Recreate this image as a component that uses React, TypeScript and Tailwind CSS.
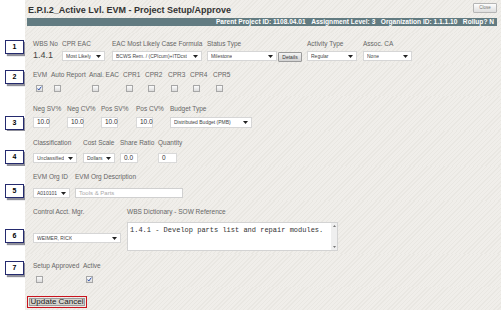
import React from "react";

const panelBg =
  "bg-[repeating-linear-gradient(135deg,#f0eeea_0px,#f0eeea_2px,#e9e7e2_2px,#e9e7e2_3px)]";

function Arrow() {
  return (
    <svg width="5" height="3" viewBox="0 0 5 3" className="shrink-0">
      <path d="M0 0 L5 0 L2.5 3 Z" fill="#222" />
    </svg>
  );
}

function Select({ value, className }: { value: string; className: string }) {
  return (
    <div
      className={`flex items-center justify-between bg-white border border-[#d6d6d6] pl-[3px] pr-[3px] text-[5px] text-[#444] leading-none whitespace-nowrap overflow-hidden ${className}`}
    >
      <span className="truncate">{value}</span>
      <Arrow />
    </div>
  );
}

function TextBox({ value, className }: { value: string; className: string }) {
  return (
    <div
      className={`flex items-center bg-white border border-[#d9d9d9] pl-[3px] text-[6.5px] text-[#333] leading-none ${className}`}
    >
      {value}
    </div>
  );
}

function Check({ checked = false }: { checked?: boolean }) {
  return (
    <div className="ml-[3px] w-[7px] h-[7px] border border-[#a7a7a7] bg-gradient-to-b from-[#fbfbfb] to-[#dcdcdc] flex items-center justify-center">
      {checked && (
        <svg width="5" height="5" viewBox="0 0 5 5">
          <path d="M0.6 2.6 L1.8 4 L4.4 0.6" stroke="#2c4fa8" strokeWidth="1" fill="none" />
        </svg>
      )}
    </div>
  );
}

function Label({ children }: { children: React.ReactNode }) {
  return (
    <div className="h-[8px] text-[6.5px] leading-[8px] text-[#666] whitespace-nowrap">
      {children}
    </div>
  );
}

function Badge({ n, mt }: { n: number; mt: string }) {
  return (
    <div className="w-[25px] shrink-0 bg-white">
      <div
        className={`ml-[5px] w-[19px] h-[14px] bg-white border-[1.5px] border-[#242a6e] shadow-[2px_2px_1px_#8f8f9a] flex items-center justify-center text-[7px] font-bold text-black ${mt}`}
      >
        {n}
      </div>
    </div>
  );
}

function Row({
  n,
  mt,
  className,
  children,
}: {
  n: number;
  mt: string;
  className: string;
  children: React.ReactNode;
}) {
  return (
    <div className="flex">
      <Badge n={n} mt={mt} />
      <div className={`flex-1 pl-[8px] ${panelBg} ${className}`}>{children}</div>
    </div>
  );
}

export default function App() {
  return (
    <div className="w-[501px] h-[312px] overflow-hidden bg-white font-['Liberation_Sans',Arial,sans-serif] flex flex-col">
      {/* header */}
      <div className="flex">
        <div className="w-[25px] shrink-0 bg-white" />
        <div className={`flex-1 h-[33px] pt-[3px] pl-[2px] pr-[4px] ${panelBg}`}>
          <div className="flex justify-between items-start h-[15px]">
            <div className="ml-[1px] mt-[2px] text-[9px] font-bold text-[#333] leading-[10px] whitespace-nowrap">
              E.P.I.2_Active Lvl. EVM - Project Setup/Approve
            </div>
            <div className="w-[24px] h-[10px] border border-[#b5b5b5] rounded-[1px] bg-gradient-to-b from-[#fdfdfd] to-[#dedede] flex items-center justify-center text-[4.5px] text-[#777] leading-none">
              Close
            </div>
          </div>
          <div className="h-[8px] bg-[#627b81] flex items-center justify-end pr-[3px] text-[6.6px] font-bold text-white leading-none whitespace-nowrap">
            Parent Project ID: 1108.04.01&nbsp;&nbsp;&nbsp;Assignment Level: 3&nbsp;&nbsp;&nbsp;Organization ID: 1.1.1.10&nbsp;&nbsp;&nbsp;Rollup? N
          </div>
        </div>
      </div>

      {/* 1 */}
      <Row n={1} mt="mt-[7px]" className="h-[31px] pt-[7px] flex">
        <div className="w-[29px] flex flex-col">
          <Label>WBS No</Label>
          <div className="mt-[2px] text-[9px] text-[#444] leading-[11px]">1.4.1</div>
        </div>
        <div className="w-[50px] flex flex-col">
          <Label>CPR EAC</Label>
          <Select value="Most Likely" className="mt-[3px] w-[43px] h-[10px]" />
        </div>
        <div className="w-[95px] flex flex-col">
          <Label>EAC Most Likely Case Formula</Label>
          <Select value="BCWS Rem. / (CPIcum)+ITDcst" className="mt-[3px] w-[90px] h-[10px]" />
        </div>
        <div className="w-[100px] flex flex-col">
          <Label>Status Type</Label>
          <div className="mt-[3px] flex items-start gap-[1px]">
            <Select value="Milestone" className="w-[70px] h-[10px]" />
            <div className="mt-[1px] w-[24px] h-[10px] border border-[#9a9a9a] rounded-[1px] bg-gradient-to-b from-[#f4f4f4] to-[#d2d2d2] flex items-center justify-center text-[5px] text-[#333] leading-none">
              Details
            </div>
          </div>
        </div>
        <div className="w-[56px] flex flex-col">
          <Label>Activity Type</Label>
          <Select value="Regular" className="mt-[3px] w-[50px] h-[10px]" />
        </div>
        <div className="flex flex-col">
          <Label>Assoc. CA</Label>
          <Select value="None" className="mt-[3px] w-[49px] h-[10px]" />
        </div>
      </Row>

      {/* 2 */}
      <Row n={2} mt="mt-[6px]" className="h-[32px] pt-[7px] flex">
        {[
          ["EVM", "w-[18px]", true],
          ["Auto Report", "w-[38px]", false],
          ["Anal. EAC", "w-[34px]", false],
          ["CPR1", "w-[22px]", false],
          ["CPR2", "w-[23px]", false],
          ["CPR3", "w-[22px]", false],
          ["CPR4", "w-[23px]", false],
          ["CPR5", "w-[22px]", false],
        ].map(([label, w, checked]) => (
          <div key={label as string} className={`${w} flex flex-col gap-[6px]`}>
            <Label>{label}</Label>
            <Check checked={checked as boolean} />
          </div>
        ))}
      </Row>

      {/* 3 */}
      <Row n={3} mt="mt-[20px]" className="h-[35px] pt-[9px] flex">
        {["Neg SV%", "Neg CV%", "Pos SV%", "Pos CV%"].map((l, i) => (
          <div key={l} className={`${i === 2 ? "w-[35px]" : "w-[34px]"} flex flex-col gap-[4px]`}>
            <Label>{l}</Label>
            <TextBox value="10.0" className="w-[17px] h-[11px]" />
          </div>
        ))}
        <div className="flex flex-col gap-[4px]">
          <Label>Budget Type</Label>
          <Select value="Distributed Budget (PMB)" className="w-[82px] h-[11px]" />
        </div>
      </Row>

      {/* 4 */}
      <Row n={4} mt="mt-[19px]" className="h-[35px] pt-[8px] flex">
        <div className="w-[50px] flex flex-col gap-[6px]">
          <Label>Classification</Label>
          <Select value="Unclassified" className="w-[44px] h-[10px]" />
        </div>
        <div className="w-[37px] flex flex-col gap-[6px]">
          <Label>Cost Scale</Label>
          <Select value="Dollars" className="w-[32px] h-[10px]" />
        </div>
        <div className="w-[38px] flex flex-col gap-[6px]">
          <Label>Share Ratio</Label>
          <TextBox value="0.0" className="w-[18px] h-[10px]" />
        </div>
        <div className="flex flex-col gap-[6px]">
          <Label>Quantity</Label>
          <TextBox value="0" className="w-[19px] h-[10px]" />
        </div>
      </Row>

      {/* 5 */}
      <Row n={5} mt="mt-[18px]" className="h-[35px] pt-[7px] flex">
        <div className="w-[42px] flex flex-col gap-[7px]">
          <Label>EVM Org ID</Label>
          <Select value="A010101" className="w-[37px] h-[10px]" />
        </div>
        <div className="flex flex-col gap-[7px]">
          <Label>EVM Org Description</Label>
          <div className="w-[108px] h-[10px] flex items-center bg-white border border-[#d0d0d0] pl-[3px] text-[6px] text-[#aaa] leading-none">
            Tools &amp; Parts
          </div>
        </div>
      </Row>

      {/* 6 */}
      <Row n={6} mt="mt-[28px]" className="h-[53px] pt-[7px] flex">
        <div className="w-[94px] flex flex-col">
          <Label>Control Acct. Mgr.</Label>
          <Select value="WEIMER, RICK" className="mt-[17px] w-[88px] h-[10px]" />
        </div>
        <div className="flex flex-col gap-[6px]">
          <Label>WBS Dictionary - SOW Reference</Label>
          <div className="w-[211px] h-[29px] flex bg-white border border-[#d3d3d3]">
            <div className="flex-1 pl-[2px] pt-[3px] font-['Liberation_Mono',monospace] text-[7px] leading-[8px] text-[#333] whitespace-nowrap">
              1.4.1 - Develop parts list and repair modules.
            </div>
            <div className="w-[6px] bg-[#efefef] flex flex-col justify-between items-center py-[2px]">
              <svg width="3" height="2" viewBox="0 0 3 2">
                <path d="M0 2 L3 2 L1.5 0 Z" fill="#777" />
              </svg>
              <svg width="3" height="2" viewBox="0 0 3 2">
                <path d="M0 0 L3 0 L1.5 2 Z" fill="#777" />
              </svg>
            </div>
          </div>
        </div>
      </Row>

      {/* 7 */}
      <Row n={7} mt="mt-[7px]" className="h-[33px] pt-[8px] flex">
        <div className="w-[50px] flex flex-col gap-[6px]">
          <Label>Setup Approved</Label>
          <Check />
        </div>
        <div className="flex flex-col gap-[6px]">
          <Label>Active</Label>
          <Check checked />
        </div>
      </Row>

      {/* buttons */}
      <div className="flex">
        <div className="w-[25px] shrink-0 bg-white" />
        <div className={`flex-1 h-[23px] pt-[9px] pl-[2px] ${panelBg}`}>
          <div className="w-[60px] h-[12px] border border-[#c8141e] p-[1px]">
            <div className="w-full h-full bg-[#d6d3ce] border border-[#9c9c9c] flex items-center justify-center text-[8px] text-[#222] leading-none whitespace-nowrap">
              Update Cancel
            </div>
          </div>
        </div>
      </div>
    </div>
  );
}
